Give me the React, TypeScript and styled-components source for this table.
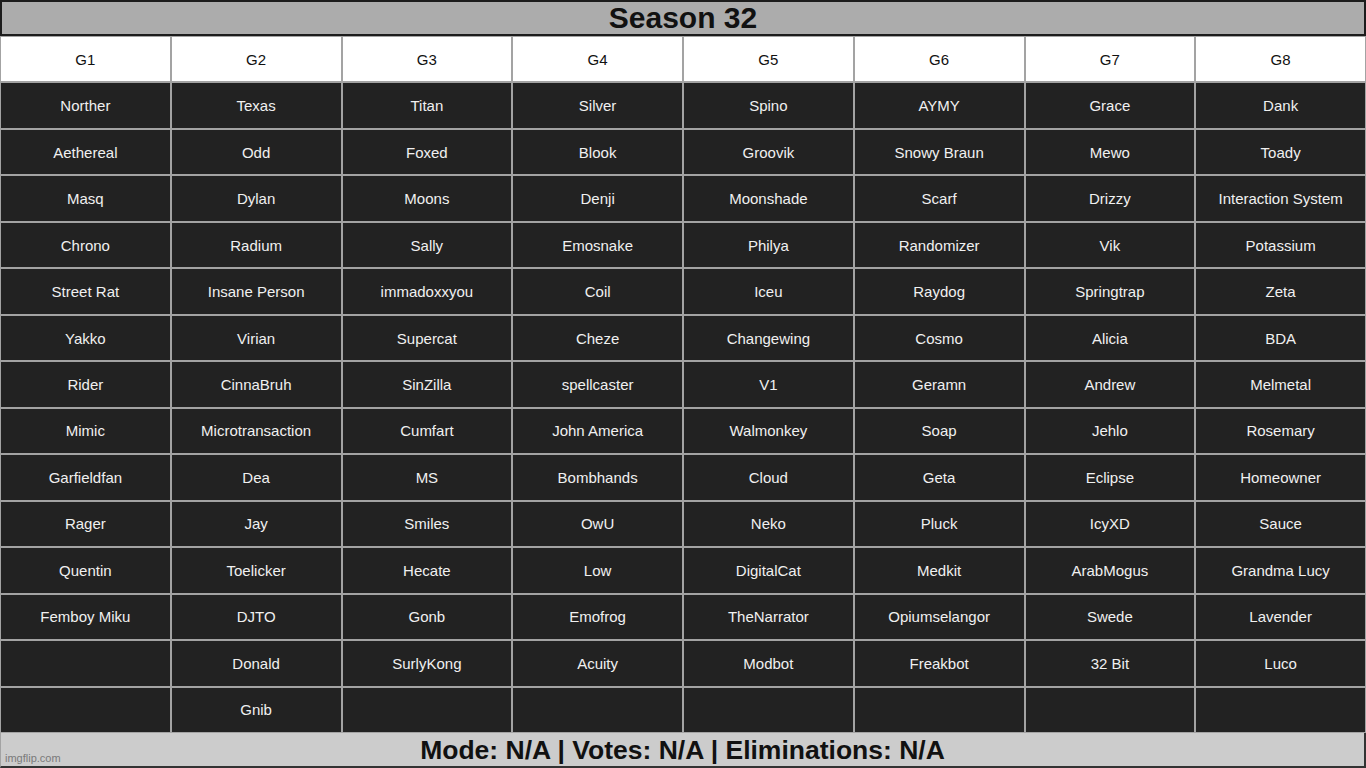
import React from "react";
import styled, { createGlobalStyle } from "styled-components";

const Global = createGlobalStyle`
  html, body { margin: 0; padding: 0; background: #fff; }
  body { font-family: "Liberation Sans", Arial, sans-serif; }
`;

const Page = styled.div`
  width: 1366px;
  height: 768px;
  display: flex;
  flex-direction: column;
  overflow: hidden;
`;

const Title = styled.div`
  height: 36px;
  box-sizing: border-box;
  border: 2px solid #1c1c1c;
  background: #acacac;
  display: flex;
  align-items: center;
  justify-content: center;
  font-weight: bold;
  font-size: 30px;
  color: #111;
`;

const Grid = styled.div`
  flex: 1;
  display: grid;
  grid-template-columns: repeat(8, 1fr);
  grid-template-rows: repeat(15, 1fr);
  gap: 2px;
  padding: 1px 1px;
  background: #a3a3a3;
`;

const Cell = styled.div<{ $head?: boolean }>`
  background: ${(p) => (p.$head ? "#ffffff" : "#222222")};
  color: ${(p) => (p.$head ? "#111" : "#f0f0f0")};
  display: flex;
  align-items: center;
  justify-content: center;
  font-size: 15px;
  white-space: nowrap;
`;

const Footer = styled.div`
  position: relative;
  height: 35px;
  box-sizing: border-box;
  background: #cccccc;
  border-left: 1px solid #a3a3a3;
  border-right: 2px solid #333;
  border-bottom: 2px solid #333;
  display: flex;
  align-items: center;
  justify-content: center;
  font-weight: bold;
  font-size: 26.5px;
  color: #111;
  padding-top: 2px;
`;

const Watermark = styled.span`
  position: absolute;
  left: 4px;
  bottom: 2px;
  font-size: 11px;
  font-weight: normal;
  color: #7a7a7a;
`;

const columns: string[][] = [
  ["Norther", "Aethereal", "Masq", "Chrono", "Street Rat", "Yakko", "Rider", "Mimic", "Garfieldfan", "Rager", "Quentin", "Femboy Miku", "", ""],
  ["Texas", "Odd", "Dylan", "Radium", "Insane Person", "Virian", "CinnaBruh", "Microtransaction", "Dea", "Jay", "Toelicker", "DJTO", "Donald", "Gnib"],
  ["Titan", "Foxed", "Moons", "Sally", "immadoxxyou", "Supercat", "SinZilla", "Cumfart", "MS", "Smiles", "Hecate", "Gonb", "SurlyKong", ""],
  ["Silver", "Blook", "Denji", "Emosnake", "Coil", "Cheze", "spellcaster", "John America", "Bombhands", "OwU", "Low", "Emofrog", "Acuity", ""],
  ["Spino", "Groovik", "Moonshade", "Philya", "Iceu", "Changewing", "V1", "Walmonkey", "Cloud", "Neko", "DigitalCat", "TheNarrator", "Modbot", ""],
  ["AYMY", "Snowy Braun", "Scarf", "Randomizer", "Raydog", "Cosmo", "Geramn", "Soap", "Geta", "Pluck", "Medkit", "Opiumselangor", "Freakbot", ""],
  ["Grace", "Mewo", "Drizzy", "Vik", "Springtrap", "Alicia", "Andrew", "Jehlo", "Eclipse", "IcyXD", "ArabMogus", "Swede", "32 Bit", ""],
  ["Dank", "Toady", "Interaction System", "Potassium", "Zeta", "BDA", "Melmetal", "Rosemary", "Homeowner", "Sauce", "Grandma Lucy", "Lavender", "Luco", ""],
];

export default function App() {
  const rows = columns[0].length;
  const cells: React.ReactNode[] = [];
  columns.forEach((_, c) => cells.push(<Cell key={`h${c}`} $head>G{c + 1}</Cell>));
  for (let r = 0; r < rows; r++) {
    for (let c = 0; c < columns.length; c++) {
      cells.push(<Cell key={`${r}-${c}`}>{columns[c][r]}</Cell>);
    }
  }
  return (
    <>
      <Global />
      <Page>
        <Title>Season 32</Title>
        <Grid>{cells}</Grid>
        <Footer>
          Mode: N/A | Votes: N/A | Eliminations: N/A
          <Watermark>imgflip.com</Watermark>
        </Footer>
      </Page>
    </>
  );
}
